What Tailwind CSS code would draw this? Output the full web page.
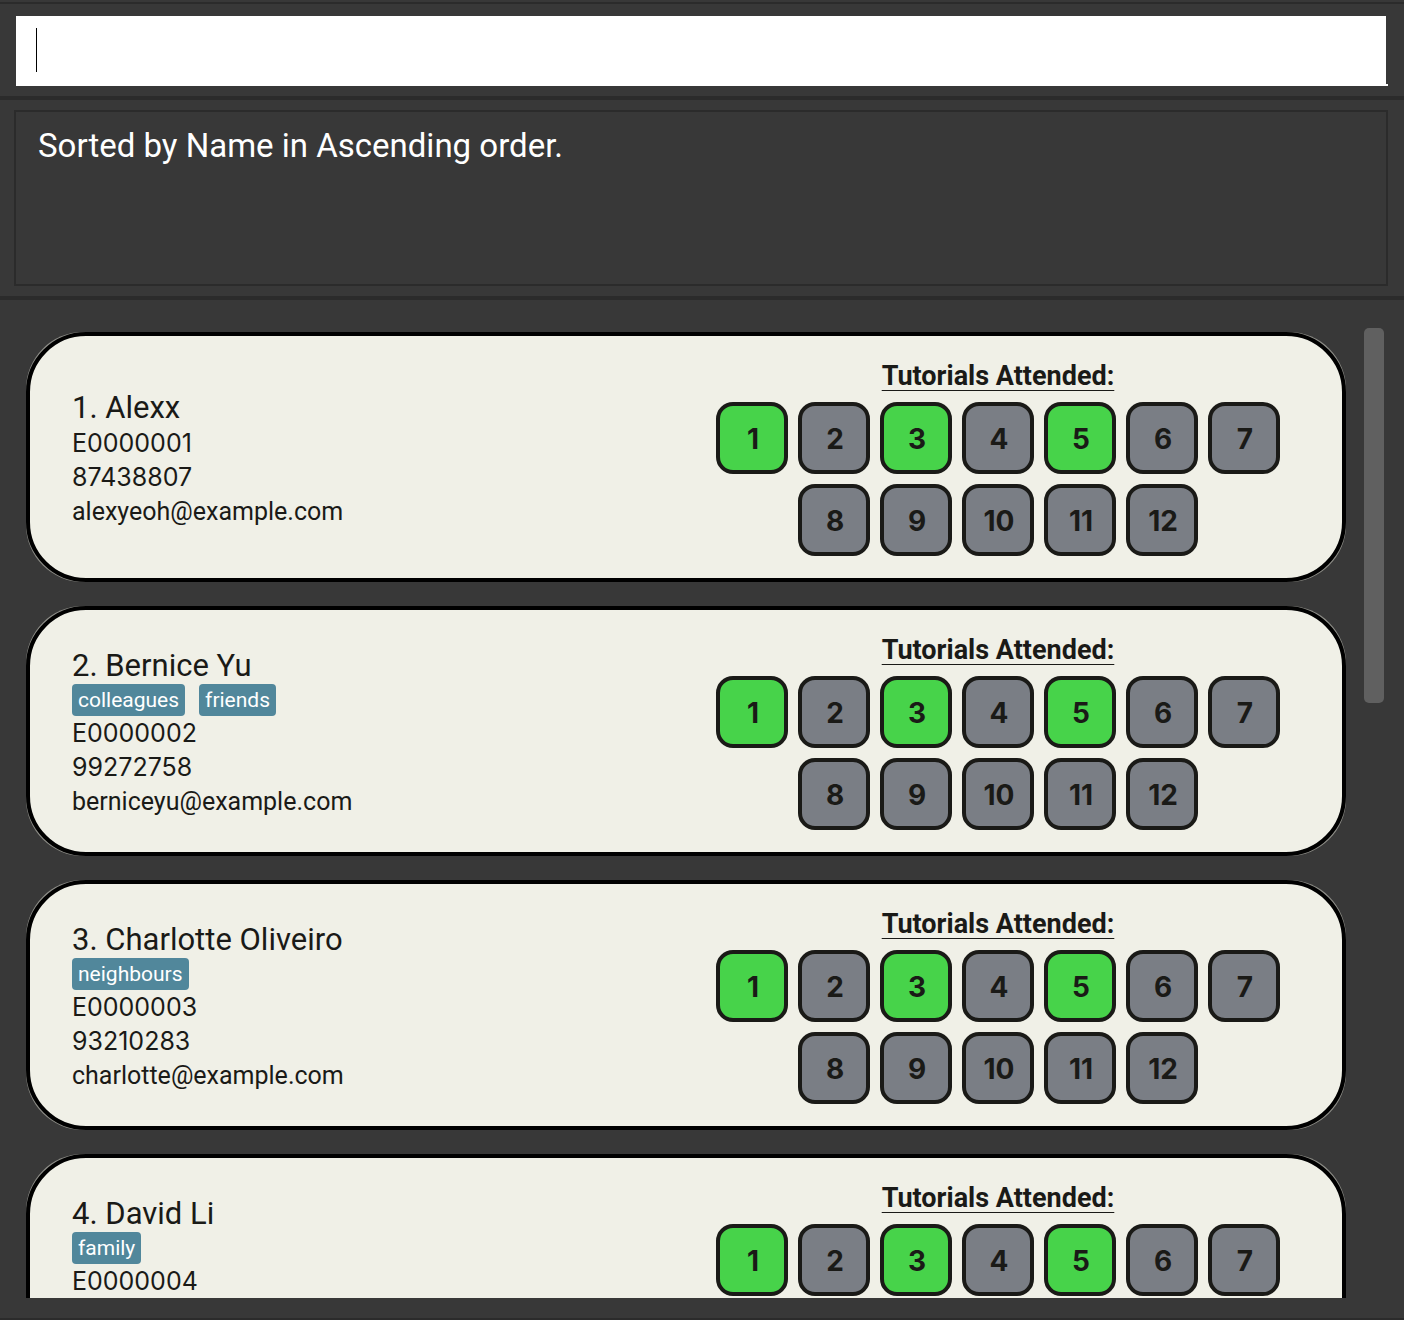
<!DOCTYPE html>
<html lang="en">
<head>
<meta charset="utf-8">
<title>Address Book</title>
<script src="https://cdn.jsdelivr.net/npm/@tailwindcss/browser@4"></script>
</head>
<body class="flex h-screen flex-col overflow-hidden bg-[#383838] font-['Roboto',sans-serif] text-[#1a1a17]">
  <div class="pt-[2px]">
    <div class="h-[2px] bg-[#2b2b2b]"></div>
  </div>
  <form class="border-b-4 border-[#2b2b2b] px-4 pt-3 pb-[10px]">
    <div class="border-b-2 border-white">
      <div class="mr-[2px] flex h-[68px] items-center bg-white pl-5">
        <span class="h-11 w-px bg-black"></span>
        <input type="text" aria-label="Command" class="h-full min-w-0 flex-1 bg-transparent text-[33px] text-black caret-black outline-none">
      </div>
    </div>
  </form>
  <section class="border-b-4 border-[#2b2b2b] py-[10px] pr-4 pl-[14px]">
    <p class="h-44 border-2 border-[#2b2b2b] px-[22px] py-[14px] text-[33px] leading-10 text-white">Sorted by Name in Ascending order.</p>
  </section>
  <main class="flex min-h-0 flex-1 pt-7 pb-5">
    <div id="people" class="flex min-w-0 flex-1 flex-col gap-6 overflow-hidden pt-1 pr-[18px] pl-[26px]"></div>
    <div class="w-10">
      <div class="h-[375px] w-5 rounded-[5px] bg-[#606060]"></div>
    </div>
  </main>
  <div class="h-[2px] shrink-0 bg-[#2b2b2b]"></div>

  <script>
    const people = [
      { name: 'Alexx', tags: [], id: 'E0000001', phone: '87438807', email: 'alexyeoh@example.com' },
      { name: 'Bernice Yu', tags: ['colleagues', 'friends'], id: 'E0000002', phone: '99272758', email: 'berniceyu@example.com' },
      { name: 'Charlotte Oliveiro', tags: ['neighbours'], id: 'E0000003', phone: '93210283', email: 'charlotte@example.com' },
      { name: 'David Li', tags: ['family'], id: 'E0000004', phone: '', email: '' },
    ];
    const attended = [1, 3, 5];
    const tile = n => `<li class="flex size-[72px] items-center justify-center rounded-[17px] border-4 border-[#1a1a17] pt-[2px] pl-[2px] ${attended.includes(n) ? 'bg-[#47d34a]' : 'bg-[#7a7e85]'}">${n}</li>`;
    const tag = t => `<li class="h-8 rounded-sm bg-[#51879b] px-[6px] text-[21px] leading-8 text-white">${t}</li>`;
    const card = (p, i) => `
      <article class="shrink-0 rounded-[57px] bg-[#8e8e88]">
        <div class="flex h-[250px] items-center justify-between rounded-[60px] border-4 border-black bg-[#f0f0e7] pr-[62px] pl-[42px]">
          <div class="pt-[2px]">
            <h2 class="h-[38px] text-[31px] leading-10">${i + 1}. ${p.name}</h2>
            ${p.tags.length ? `<ul class="flex gap-[14px]">${p.tags.map(tag).join('')}</ul>` : ''}
            <p class="h-[34px] font-['Inter',sans-serif] text-[25px] leading-[34px]">${p.id}</p>
            <p class="h-[34px] font-['Inter',sans-serif] text-[25px] leading-[34px]">${p.phone}</p>
            <p class="h-[34px] text-[25px] leading-9">${p.email}</p>
          </div>
          <div class="flex flex-col items-center">
            <h3 class="mb-2 text-[27px] leading-9 font-bold underline decoration-1 underline-offset-[5px]">Tutorials Attended:</h3>
            <ol class="flex w-[564px] flex-wrap justify-center gap-[10px] font-['Inter',sans-serif] text-[28px] font-bold">
              ${Array.from({ length: i < 3 ? 12 : 7 }, (_, n) => tile(n + 1)).join('')}
              ${i < 3 ? '' : '<li class="h-[72px] w-full"></li>'}
            </ol>
          </div>
        </div>
      </article>`;
    document.getElementById('people').innerHTML = people.map(card).join('');
  </script>
</body>
</html>
